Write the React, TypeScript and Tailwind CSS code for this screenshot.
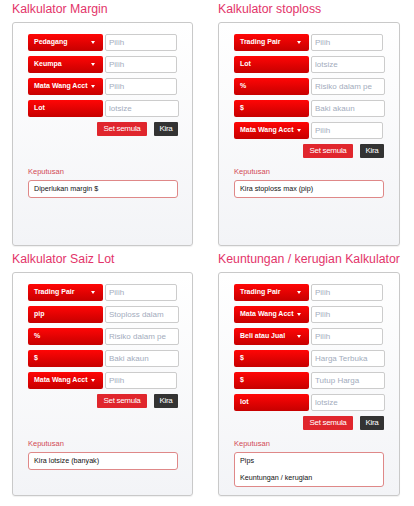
import React from "react";

type Field = {
  label: string;
  caret?: boolean;
  placeholder: string;
  wide?: boolean;
};

type Calc = {
  title: string;
  fields: Field[];
  results: string[];
};

const calcs: Calc[] = [
  {
    title: "Kalkulator Margin",
    fields: [
      { label: "Pedagang", caret: true, placeholder: "Pilih" },
      { label: "Keumpa", caret: true, placeholder: "Pilih" },
      { label: "Mata Wang Acct", caret: true, placeholder: "Pilih" },
      { label: "Lot", placeholder: "lotsize", wide: true },
    ],
    results: ["Diperlukan margin $"],
  },
  {
    title: "Kalkulator stoploss",
    fields: [
      { label: "Trading Pair", caret: true, placeholder: "Pilih" },
      { label: "Lot", placeholder: "lotsize", wide: true },
      { label: "%", placeholder: "Risiko dalam peratus", wide: true },
      { label: "$", placeholder: "Baki akaun", wide: true },
      { label: "Mata Wang Acct", caret: true, placeholder: "Pilih" },
    ],
    results: ["Kira stoploss max (pip)"],
  },
  {
    title: "Kalkulator Saiz Lot",
    fields: [
      { label: "Trading Pair", caret: true, placeholder: "Pilih" },
      { label: "pip", placeholder: "Stoploss dalam pip", wide: true },
      { label: "%", placeholder: "Risiko dalam peratus", wide: true },
      { label: "$", placeholder: "Baki akaun", wide: true },
      { label: "Mata Wang Acct", caret: true, placeholder: "Pilih" },
    ],
    results: ["Kira lotsize (banyak)"],
  },
  {
    title: "Keuntungan / kerugian Kalkulator",
    fields: [
      { label: "Trading Pair", caret: true, placeholder: "Pilih" },
      { label: "Mata Wang Acct", caret: true, placeholder: "Pilih" },
      { label: "Beli atau Jual", caret: true, placeholder: "Pilih" },
      { label: "$", placeholder: "Harga Terbuka", wide: true },
      { label: "$", placeholder: "Tutup Harga", wide: true },
      { label: "lot", placeholder: "lotsize", wide: true },
    ],
    results: ["Pips", "Keuntungan / kerugian"],
  },
];

function FieldRow({ f }: { f: Field }) {
  return (
    <div className="flex h-[17px] gap-[2px]">
      <div className="flex w-[75px] items-center justify-between rounded-[2px] bg-linear-to-b from-[#ff0606] to-[#c70000] pl-[6px] pr-[8px] text-[7px] font-bold text-white">
        <span className="whitespace-nowrap">{f.label}</span>
        {f.caret && (
          <span className="h-0 w-0 border-x-[2.5px] border-t-[3px] border-x-transparent border-t-white" />
        )}
      </div>
      <input
        readOnly
        placeholder={f.placeholder}
        className={`${f.wide ? "w-[74px]" : "w-[72px]"} h-[17px] rounded-[2px] border border-[#cccccc] bg-white pl-[3px] pr-[12px] text-[8px] outline-none placeholder:text-[#a3acbd]`}
      />
    </div>
  );
}

function Card({ c, formH }: { c: Calc; formH: string }) {
  const tall = c.results.length > 1;
  return (
    <section className="flex flex-col">
      <h2 className="h-[22px] pt-[1px] text-[12.3px] leading-[16px] text-[#e3346a]">{c.title}</h2>
      <div className="h-[224px] rounded-[3px] border border-[#c9c9c9] bg-linear-to-b from-white to-[#f3f4f7] pl-[15px] pt-[11px] shadow-[0_1px_1px_rgba(0,0,0,0.06)]">
        <div className={`flex w-[151px] flex-col ${formH}`}>
          <div className="flex flex-col gap-[5px]">
            {c.fields.map((f, i) => (
              <FieldRow key={i} f={f} />
            ))}
          </div>
          <div className="mt-[5px] flex justify-end gap-[7px] pr-[1px]">
            <button className="h-[14px] w-[50px] rounded-[1px] bg-[#e0262d] text-[8px] leading-[14px] tracking-[-0.3px] text-white">
              Set semula
            </button>
            <button className="h-[14px] w-[24px] rounded-[1px] bg-[#333333] text-[8px] leading-[14px] tracking-[-0.3px] text-white">
              Kira
            </button>
          </div>
        </div>
        <div className="mt-[9px] text-[7.5px] leading-[10px] text-[#d24a56]">Keputusan</div>
        <div
          className={`mt-[3px] w-[150px] rounded-[3px] border border-[#df8888] bg-white px-[5px] text-[7.2px] text-[#111111] ${
            tall ? "flex h-[35px] flex-col justify-center gap-[7px]" : "flex h-[18px] items-center"
          }`}
        >
          {c.results.map((r) => (
            <div key={r} className="leading-[10px]">
              {r}
            </div>
          ))}
        </div>
      </div>
    </section>
  );
}

export default function App() {
  return (
    <div
      className="grid h-[506px] w-[414px] grid-cols-[181px_182px] content-start gap-x-[25px] gap-y-[4px] bg-white pl-[12px]"
      style={{ fontFamily: '"Liberation Sans", Arial, sans-serif' }}
    >
      <Card c={calcs[0]} formH="h-[124px]" />
      <Card c={calcs[1]} formH="h-[124px]" />
      <Card c={calcs[2]} formH="h-[146px]" />
      <Card c={calcs[3]} formH="h-[146px]" />
    </div>
  );
}
